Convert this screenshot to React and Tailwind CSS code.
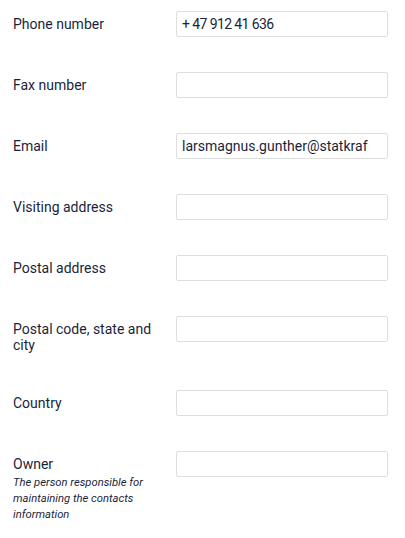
import React from "react";

const rows = [
  { label: "Phone number", value: "+ 47 912 41 636", tight: true },
  { label: "Fax number", value: "" },
  { label: "Email", value: "larsmagnus.gunther@statkraf" },
  { label: "Visiting address", value: "" },
  { label: "Postal address", value: "" },
  { label: "Postal code, state and city", value: "" },
  { label: "Country", value: "" },
  {
    label: "Owner",
    value: "",
    desc: "The person responsible for maintaining the contacts information",
  },
];

export default function App() {
  return (
    <div
      className="w-[405px] min-h-[538px] bg-white pt-[11px] pl-[13px] text-[#1b1f3b]"
      style={{ fontFamily: "Roboto, 'Liberation Sans', sans-serif" }}
    >
      <div className="flex flex-col gap-[35px]">
        {rows.map((r) => (
          <div key={r.label} className="flex items-start">
            <div className="w-[163px] shrink-0 pt-[5px] pb-[2px]">
              <div className="w-[146px] text-[14px] leading-[16px]">{r.label}</div>
              {r.desc && (
                <div className="mt-[3px] w-[140px] text-[11.25px] italic leading-[16px]">
                  {r.desc}
                </div>
              )}
            </div>
            <div className="w-[212px] h-[26px] border border-[#dedede] rounded-[2px] bg-white px-[5px] flex items-center overflow-hidden whitespace-nowrap text-[14px] leading-[16px]">
              <span className={r.tight ? "tracking-[-0.6px]" : ""}>{r.value}</span>
            </div>
          </div>
        ))}
      </div>
    </div>
  );
}
